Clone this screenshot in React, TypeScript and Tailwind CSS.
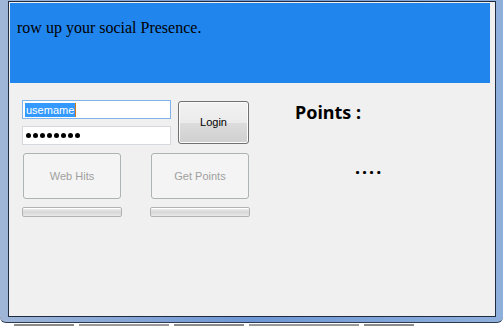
import React from "react";

function ProgressBar() {
  return (
    <div className="h-[10px] w-[100px] rounded-[2px] border border-[#b2b2b2] bg-gradient-to-b from-[#f3f3f3] via-[#d6d6d6] to-[#e9e9e9] shadow-[inset_0_1px_0_#ffffff]" />
  );
}

function DisabledButton({ label }: { label: string }) {
  return (
    <div className="flex h-[46px] w-[98px] items-center justify-center rounded-[3px] border border-[#adb2b5] bg-[#f4f4f4] text-[11px] text-[#a0a0a0]">
      {label}
    </div>
  );
}

export default function App() {
  return (
    <div className="h-[327px] w-[503px] overflow-hidden bg-white font-['Liberation_Sans',sans-serif]">
      <div className="h-[323px] w-[503px] rounded-b-[6px] border-b border-[#2c3b52] bg-gradient-to-r from-[#9fb6d8] via-[#6f97d4] to-[#8fb0dc] pl-[8px] pr-[7px] pt-[1px]">
        <div className="flex h-[316px] w-[488px] flex-col border border-[#1f2c42] bg-[#f0f0f0]">
          <div className="ml-[1px] mt-[1px] h-[80px] w-[480px] bg-[#2185ee] pl-[7px] pt-[13px] font-['Liberation_Serif',serif] text-[16px] text-black">
            row up your social Presence.
          </div>

          <div className="flex pl-[13px] pt-[17px]">
            <div className="flex flex-col">
              <div className="flex gap-[7px]">
                <div className="flex flex-col gap-[7px]">
                  <div className="flex h-[19px] w-[149px] items-center border border-[#7eb4ea] bg-white pl-[2px]">
                    <span className="bg-[#3399ff] px-[1px] text-[11px] leading-[14px] text-white">usemame</span>
                    <span className="h-[14px] w-[1px] bg-[#d97a1a]" />
                  </div>
                  <div className="flex h-[19px] w-[149px] items-center gap-[2px] border border-[#d5d9de] bg-white pl-[3px]">
                    {Array.from({ length: 8 }).map((_, i) => (
                      <span key={i} className="h-[5px] w-[5px] rounded-full bg-black" />
                    ))}
                  </div>
                </div>
                <div className="mt-[1px] flex h-[43px] w-[71px] items-center justify-center rounded-[3px] border border-[#707070] bg-[linear-gradient(#f2f2f2_0%,#ebebeb_50%,#dddddd_50%,#cfcfcf_100%)] text-[11px] text-black shadow-[inset_0_0_0_1px_#fcfcfc]">
                  Login
                </div>
              </div>

              <div className="ml-[1px] mt-[8px] flex gap-[30px]">
                <DisabledButton label="Web Hits" />
                <DisabledButton label="Get Points" />
              </div>

              <div className="mt-[8px] flex gap-[28px]">
                <ProgressBar />
                <ProgressBar />
              </div>
            </div>

            <div className="ml-[45px] flex flex-col font-['Noto_Sans',sans-serif] font-bold text-black">
              <div className="text-[18px] leading-[24px]">Points :</div>
              <div className="ml-[60px] mt-[31px] text-[18px] leading-[24px] tracking-[2px]">....</div>
            </div>
          </div>
        </div>
      </div>
      <div className="flex gap-[5px] pl-[14px] pt-[1px]">
        <div className="h-[2px] w-[60px] bg-[#8a8a8a]" />
        <div className="h-[2px] w-[90px] bg-[#999]" />
        <div className="h-[2px] w-[70px] bg-[#8a8a8a]" />
        <div className="h-[2px] w-[110px] bg-[#999]" />
        <div className="h-[2px] w-[50px] bg-[#8a8a8a]" />
      </div>
    </div>
  );
}
